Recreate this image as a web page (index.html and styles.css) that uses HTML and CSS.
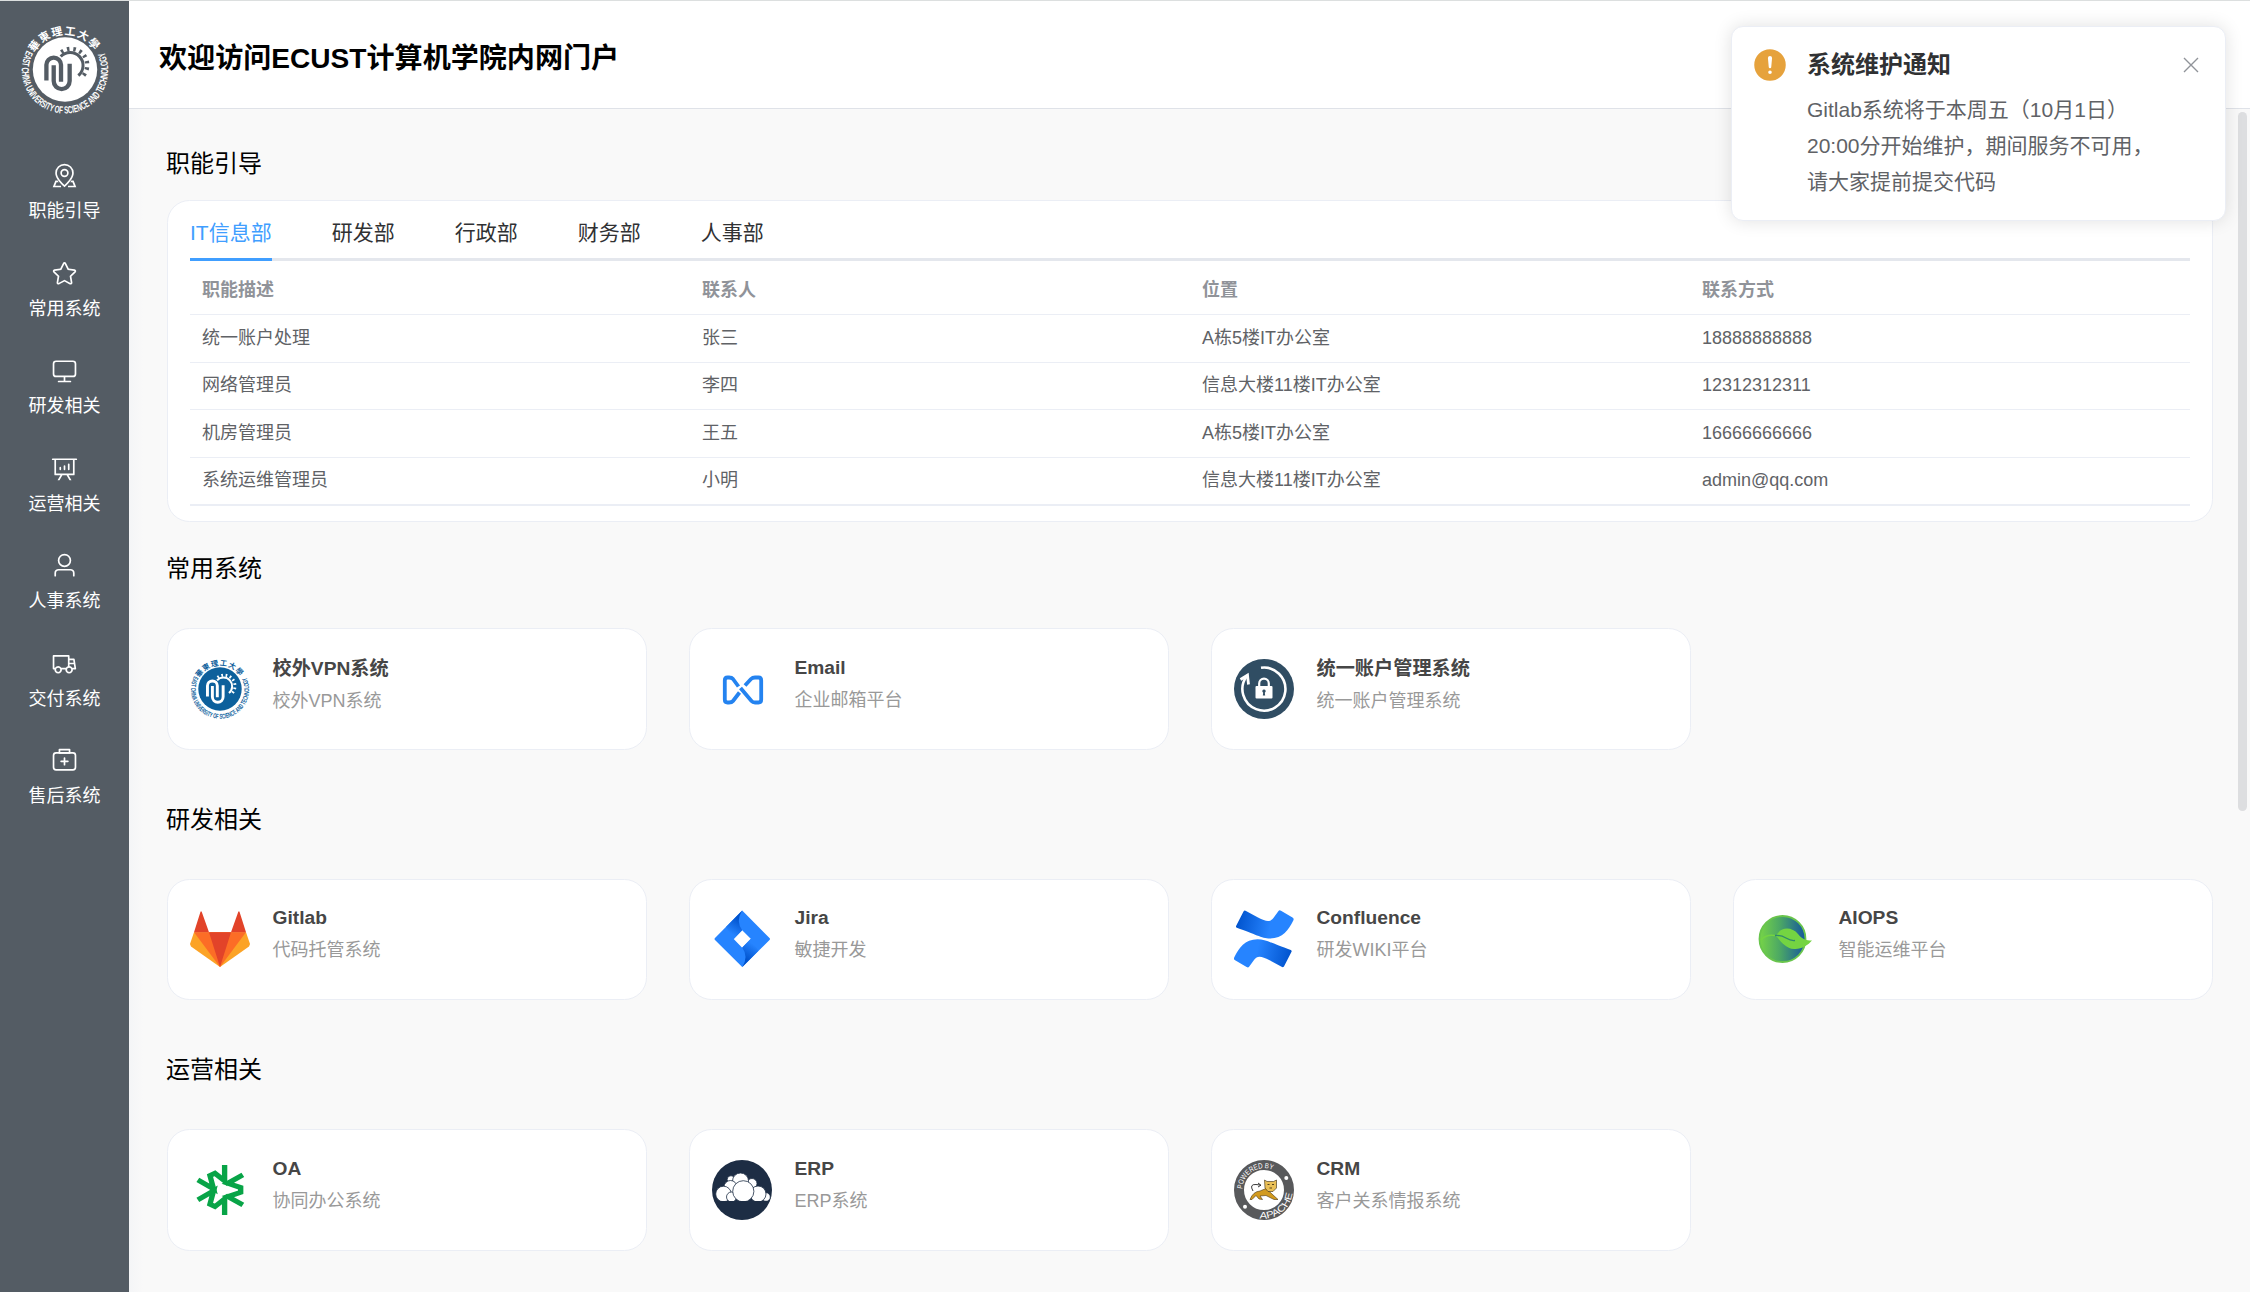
FILE: index.html
```html
<!DOCTYPE html>
<html lang="zh-CN">
<head>
<meta charset="utf-8">
<title>ECUST计算机学院内网门户</title>
<link rel="stylesheet" href="styles.css">
</head>
<body>
<svg class="defs" aria-hidden="true">
  <defs>
    <path id="ring-top" d="M60 105A105 105 0 0 1 244 105"/>
    <path id="ring-bottom" d="M37 97A130 130 0 1 0 267 97"/>
    <symbol id="emblem" viewBox="20 21 264 268">
      <circle cx="152" cy="155" r="97" fill="currentColor"/>
      <g fill="none" stroke="var(--cut)">
        <path d="M139 116A39 39 0 1 1 192 173" stroke-width="9"/>
        <path d="M141 103A48 48 0 1 1 200 180" stroke-width="13" stroke-dasharray="7.500 11.500"/>
        <path d="M96 188V141A22 22 0 0 1 140 141V192" stroke-width="13"/>
        <path d="M118 142V190A24 24 0 0 0 166 190V138" stroke-width="13"/>
      </g>
      <text class="ring-cn" fill="currentColor"><textPath href="#ring-top" textLength="216">華東理工大學</textPath></text>
      <text class="ring-en" fill="currentColor"><textPath href="#ring-bottom" textLength="528" lengthAdjust="spacingAndGlyphs">EAST CHINA UNIVERSITY OF SCIENCE AND TECHNOLOGY</textPath></text>
    </symbol>
    <linearGradient id="jira-shade" x1="28" y1="8" x2="18" y2="24" gradientUnits="userSpaceOnUse"><stop offset=".1" stop-color="#0052cc"/><stop offset="1" stop-color="#2684ff"/></linearGradient>
    <linearGradient id="conf-shade" x1="2" y1="12" x2="40" y2="20" gradientUnits="userSpaceOnUse"><stop offset="0" stop-color="#0052cc"/><stop offset=".9" stop-color="#2684ff"/></linearGradient>
    <linearGradient id="leaf-shade"><stop offset="0" stop-color="#76d447"/><stop offset=".45" stop-color="#4ba765"/><stop offset="1" stop-color="#14569f"/></linearGradient>
    <clipPath id="cloud-clip"><path d="M0 0H60V41H0z"/></clipPath>
  </defs>
</svg>

<div class="app">
  <aside class="sidebar">
    <svg class="logo"><use href="#emblem"/></svg>
    <nav class="nav">
      <a class="nav-item"><svg viewBox="0 0 1024 1024"><path d="M800 416a288 288 0 1 0-576 0c0 118.144 94.528 272.128 288 456.576C705.472 688.128 800 534.144 800 416zM512 960C277.312 746.688 160 565.312 160 416a352 352 0 0 1 704 0c0 149.312-117.312 330.688-352 544z"/><path d="M512 512a96 96 0 1 0 0-192 96 96 0 0 0 0 192zm0 64a160 160 0 1 1 0-320 160 160 0 0 1 0 320z"/><path d="M250 704H166L64 960H380V896H158L212 768H290zM774 704H858L960 960H644V896H866L812 768H734z"/></svg>职能引导</a>
      <a class="nav-item"><svg viewBox="0 0 1024 1024"><path d="m512 747.840 228.160 119.936a6.400 6.400 0 0 0 9.280-6.720l-43.520-254.080 184.512-179.904a6.400 6.400 0 0 0-3.520-10.880l-255.104-37.120L517.760 147.904a6.400 6.400 0 0 0-11.520 0L392.192 379.072l-255.104 37.120a6.400 6.400 0 0 0-3.520 10.880L318.080 606.976l-43.584 254.080a6.400 6.400 0 0 0 9.280 6.720L512 747.840zM313.600 924.480a70.400 70.400 0 0 1-102.144-74.240l37.888-220.928L88.960 472.960A70.400 70.400 0 0 1 128 352.896l221.760-32.256 99.200-200.960a70.400 70.400 0 0 1 126.208 0l99.200 200.960 221.824 32.256a70.400 70.400 0 0 1 39.040 120.064L774.720 629.376l37.888 220.928a70.400 70.400 0 0 1-102.144 74.240L512 820.096l-198.400 104.320z"/></svg>常用系统</a>
      <a class="nav-item"><svg viewBox="0 0 1024 1024"><path d="M544 768v128h192a32 32 0 1 1 0 64H288a32 32 0 1 1 0-64h192V768H192A128 128 0 0 1 64 640V256a128 128 0 0 1 128-128h640a128 128 0 0 1 128 128v384a128 128 0 0 1-128 128H544zM192 192a64 64 0 0 0-64 64v384a64 64 0 0 0 64 64h640a64 64 0 0 0 64-64V256a64 64 0 0 0-64-64H192z"/></svg>研发相关</a>
      <a class="nav-item"><svg viewBox="0 0 1024 1024"><path d="m665.216 768 110.848 192h-73.856L591.360 768H433.024L322.176 960H248.320l110.848-192H160a32 32 0 0 1-32-32V192H64a32 32 0 0 1 0-64h896a32 32 0 1 1 0 64h-64v544a32 32 0 0 1-32 32H665.216zM832 192H192v512h640V192zM352 448a32 32 0 0 1 32 32v64a32 32 0 0 1-64 0v-64a32 32 0 0 1 32-32zm160-64a32 32 0 0 1 32 32v128a32 32 0 0 1-64 0V416a32 32 0 0 1 32-32zm160-64a32 32 0 0 1 32 32v192a32 32 0 1 1-64 0V352a32 32 0 0 1 32-32z"/></svg>运营相关</a>
      <a class="nav-item"><svg viewBox="0 0 1024 1024"><path d="M512 512a192 192 0 1 0 0-384 192 192 0 0 0 0 384zm0 64a256 256 0 1 1 0-512 256 256 0 0 1 0 512zm320 320v-96a96 96 0 0 0-96-96H288a96 96 0 0 0-96 96v96a32 32 0 1 1-64 0v-96a160 160 0 0 1 160-160h448a160 160 0 0 1 160 160v96a32 32 0 1 1-64 0z"/></svg>人事系统</a>
      <a class="nav-item"><svg viewBox="0 0 1024 1024"><path d="M128.896 736H96a32 32 0 0 1-32-32V224a32 32 0 0 1 32-32h576a32 32 0 0 1 32 32v96h164.544a32 32 0 0 1 31.616 27.136l54.144 352A32 32 0 0 1 922.688 736h-91.520a144 144 0 1 1-286.272 0H415.104a144 144 0 1 1-286.272 0zm23.360-64a143.872 143.872 0 0 1 239.488 0H568.320c17.088-25.600 42.240-45.376 71.744-55.808V256H128v416h24.256zm655.488 0h77.632l-19.648-128H704v64.896A144 144 0 0 1 807.744 672zm48.128-192-14.720-96H704v96h151.872zM688 832a80 80 0 1 0 0-160 80 80 0 0 0 0 160zm-416 0a80 80 0 1 0 0-160 80 80 0 0 0 0 160z"/></svg>交付系统</a>
      <a class="nav-item"><svg viewBox="0 0 1024 1024"><path d="M192 256a64 64 0 0 0-64 64v448a64 64 0 0 0 64 64h640a64 64 0 0 0 64-64V320a64 64 0 0 0-64-64H192zm0-64h640a128 128 0 0 1 128 128v448a128 128 0 0 1-128 128H192A128 128 0 0 1 64 768V320a128 128 0 0 1 128-128z"/><path d="M544 512h96a32 32 0 0 1 0 64h-96v96a32 32 0 0 1-64 0v-96h-96a32 32 0 0 1 0-64h96v-96a32 32 0 0 1 64 0v96zM352 128v64h320v-64H352zm-32-64h384a32 32 0 0 1 32 32v128a32 32 0 0 1-32 32H320a32 32 0 0 1-32-32V96a32 32 0 0 1 32-32z"/></svg>售后系统</a>
    </nav>
  </aside>

  <div class="page">
    <header class="header"><h3>欢迎访问ECUST计算机学院内网门户</h3></header>

    <main class="main">
      <h4 class="section-title">职能引导</h4>
      <section class="panel">
        <div class="tabs">
          <span class="tab active">IT信息部</span><span class="tab">研发部</span><span class="tab">行政部</span><span class="tab">财务部</span><span class="tab">人事部</span>
        </div>
        <table class="table">
          <thead><tr><th>职能描述</th><th>联系人</th><th>位置</th><th>联系方式</th></tr></thead>
          <tbody>
            <tr><td>统一账户处理</td><td>张三</td><td>A栋5楼IT办公室</td><td>18888888888</td></tr>
            <tr><td>网络管理员</td><td>李四</td><td>信息大楼11楼IT办公室</td><td>12312312311</td></tr>
            <tr><td>机房管理员</td><td>王五</td><td>A栋5楼IT办公室</td><td>16666666666</td></tr>
            <tr><td>系统运维管理员</td><td>小明</td><td>信息大楼11楼IT办公室</td><td>admin@qq.com</td></tr>
          </tbody>
        </table>
      </section>

      <h4 class="section-title first">常用系统</h4>
      <div class="cards">
        <a class="card"><svg class="card-icon emblem-blue"><use href="#emblem"/></svg><div><b>校外VPN系统</b><p>校外VPN系统</p></div></a>
        <a class="card">
          <svg class="card-icon" viewBox="0 0 60 60"><g fill="none" stroke="#2483f0" stroke-width="3.800" stroke-linejoin="round"><path d="M26.500 27.500 21 20Q19.800 18.500 17 18.500H15.500Q12.800 18.500 12.800 21.500V40.500Q12.800 43.500 15.500 43.500H17Q19.800 43.500 21 42L27.500 33.500"/><path d="M33 26.500 39 20Q40.500 18.500 43 18.500H46.500Q49.200 18.500 49.200 21.500V40.500Q49.200 43.500 46.500 43.500H43Q40.800 43.500 39.500 42L28.500 29"/></g></svg>
          <div class="latin"><b>Email</b><p>企业邮箱平台</p></div></a>
        <a class="card">
          <svg class="card-icon" viewBox="0 0 60 60"><circle cx="30" cy="30" r="30" fill="#304d63"/><g fill="none" stroke="#fff"><path d="M27 8.800A21.500 21.500 0 1 1 12.500 17.500" stroke-width="2.600"/><path d="M6.500 20.500 13.500 16.200 14.500 25.500" stroke-width="2.800"/><path d="M25.200 28V24.500A4.800 4.800 0 0 1 34.800 24.500V28" stroke-width="2.200"/></g><rect x="21.500" y="27" width="17" height="12.500" rx="1" fill="#fff"/><path d="M30 30.500a1.700 1.700 0 0 1 .8 3.200L31.200 36.500H28.800L29.200 33.700A1.700 1.700 0 0 1 30 30.500z" fill="#304d63"/></svg>
          <div><b>统一账户管理系统</b><p>统一账户管理系统</p></div></a>
      </div>

      <h4 class="section-title next">研发相关</h4>
      <div class="cards">
        <a class="card">
          <svg class="card-icon" viewBox="0 0 60 60"><path d="M4 23.300 0 35 1 37.500 30 58 59 37.500 60 35 56 23.300z" fill="#fca326"/><path d="M4 23.300H56L30 58z" fill="#fc6d26"/><path d="M19 23.300H41L30 58zM4 23.300 10.500 2.800Q11 1.500 11.700 2.800L19 23.300zM56 23.300 49.500 2.800Q49 1.500 48.300 2.800L41 23.300z" fill="#e24329"/></svg>
          <div class="latin"><b>Gitlab</b><p>代码托管系统</p></div></a>
        <a class="card">
          <svg class="card-icon" viewBox="0 0 60 60"><path d="M30.200 1.500 57.500 29Q58.500 30 57.500 31L30.200 58 3 31Q2 30 3 29zM30.200 21.200 21.700 30 30.200 38.800 39 30z" fill="#2684ff" fill-rule="evenodd"/><g id="jira-fold"><path d="M30.200 1.500Q23.500 12 30.200 21.200L21.700 30 14 18z" fill="url(#jira-shade)"/></g><use href="#jira-fold" transform="rotate(180 30.200 29.900)"/></svg>
          <div class="latin"><b>Jira</b><p>敏捷开发</p></div></a>
        <a class="card">
          <svg class="card-icon" viewBox="0 0 60 60"><g id="conf-wave"><path d="M9.500 2.500Q10.500 1 12 2L24 8.500C33 13 36.500 13.500 40.500 7.500L44.500 2Q45.500.800 47 1.800L58.500 8.500Q60.300 9.700 59.300 11.500C54.500 21 49 29.500 36 29.500C27.500 29.500 21 25 2.800 18.800Q1.500 18 2.200 16.800z" fill="url(#conf-shade)"/></g><use href="#conf-wave" transform="rotate(180 29.800 29.900)"/></svg>
          <div class="latin"><b>Confluence</b><p>研发WIKI平台</p></div></a>
        <a class="card">
          <svg class="card-icon" viewBox="0 0 60 60"><circle cx="26.500" cy="30" r="23" fill="url(#leaf-shade)" stroke="#69c54c" stroke-width="1.800"/><path d="M20 27C25 17 36 18 42 25C46 30 50 31.500 56 31.500C52 36 46 40.500 38 40C29 39.500 24 31 20 27z" fill="#74d442"/><path d="M5 31Q10 25 19 26.500" fill="none" stroke="#74d442" stroke-width="1.500"/><path d="M19 26.500Q25 26 30 29T39 31.500" fill="none" stroke="#308a6b" stroke-width="1.300"/></svg>
          <div class="latin"><b>AIOPS</b><p>智能运维平台</p></div></a>
      </div>

      <h4 class="section-title next">运营相关</h4>
      <div class="cards">
        <a class="card">
          <svg class="card-icon" viewBox="0 0 60 60"><g transform="translate(-30 -50) scale(.357 .333)" fill="none" stroke="#08a447" stroke-width="15"><path d="M181 165V213L154 190 140 197 150 237 106 210"/><path d="M181 315V267L154 290 140 283 150 243 106 270"/><path d="M232 195 190 220 226 233V247L190 260 232 285"/></g></svg>
          <div class="latin"><b>OA</b><p>协同办公系统</p></div></a>
        <a class="card">
          <svg class="card-icon" viewBox="0 0 60 60"><circle cx="30" cy="30" r="30" fill="#1d2d44"/><g fill="#fff" stroke="#1d2d44" stroke-width=".8" clip-path="url(#cloud-clip)"><circle cx="19" cy="19.500" r="3.800"/><circle cx="40" cy="23.500" r="5"/><circle cx="28.500" cy="21" r="8"/><circle cx="18.500" cy="27" r="6.500"/><circle cx="54" cy="37" r="4.300"/><circle cx="11.500" cy="34" r="7.800"/><circle cx="46" cy="34" r="8"/><circle cx="19.500" cy="37" r="5"/><circle cx="31.300" cy="31.300" r="10.600"/></g></svg>
          <div class="latin"><b>ERP</b><p>ERP系统</p></div></a>
        <a class="card">
          <svg class="card-icon" viewBox="0 0 60 60"><defs><path id="seal-top" d="M8.300 29A21.700 21.700 0 0 1 42 11.800"/><path id="seal-bottom" d="M25.500 58.200A28.500 28.500 0 0 0 58.500 31"/></defs><circle cx="30" cy="30" r="25" fill="#fff" stroke="#58595b" stroke-width="10"/><circle cx="52.300" cy="18" r="2" fill="#fff"/><circle cx="11" cy="46.700" r="2" fill="#fff"/>
          <text class="seal"><textPath href="#seal-top" textLength="42" lengthAdjust="spacingAndGlyphs">POWERED BY</textPath></text><text class="seal large"><textPath href="#seal-bottom" textLength="46" lengthAdjust="spacingAndGlyphs">APACHE</textPath></text>
          <path d="M19 31Q15 24 22 24.500L26 25M24 23 27 25.200 24 27" fill="none" stroke="#222" stroke-width=".9"/><path d="M16 39.500Q19 31.500 26 31L32 28.500 38 34 44 39.500 40 39.500 32 35.500 26 36 28.500 39.500 25 39 22 35.500 18 39.500z" fill="#d29a1e" stroke="#4c3510" stroke-width=".6"/><path d="M30.500 20 33 21.500H39.500L42.500 20V28L39 31.500H34L31 28z" fill="#eac057" stroke="#3b2c12" stroke-width=".6"/><path d="M33.500 24.500H35.500M38 24.500H40M35.500 28H38" stroke="#443313" stroke-width=".9"/></svg>
          <div class="latin"><b>CRM</b><p>客户关系情报系统</p></div></a>
      </div>
    </main>
    <div class="scroll-thumb"></div>
  </div>
</div>

<div class="notice" role="alert">
  <svg class="notice-icon" viewBox="0 0 1024 1024"><path d="M512 64a448 448 0 1 1 0 896 448 448 0 0 1 0-896zm0 192a58.432 58.432 0 0 0-58.240 63.744l23.360 256.384a35.072 35.072 0 0 0 69.760 0l23.296-256.384A58.432 58.432 0 0 0 512 256zm0 512a51.200 51.200 0 1 0 0-102.400 51.200 51.200 0 0 0 0 102.400z" fill="#e6a23c"/></svg>
  <div class="notice-body">
    <h2>系统维护通知</h2>
    <p>Gitlab系统将于本周五（10月1日）<br>20:00分开始维护，期间服务不可用，<br>请大家提前提交代码</p>
  </div>
  <svg class="notice-close" viewBox="0 0 16 16"><path d="M1 1 15 15M15 1 1 15" stroke="#909399" stroke-width="1.400"/></svg>
</div>
</body>
</html>
```
FILE: styles.css
```css
* { box-sizing: border-box; }
html { height: 100%; overflow: hidden; }
body {
  margin: 0;
  height: 100%;
  overflow: hidden;
  font-family: "Liberation Sans", "Noto Sans CJK SC", sans-serif;
  color: #000;
  background: #fff;
}
h2, h3, h4, p { margin: 0; }
.defs { position: absolute; width: 0; height: 0; }

.app {
  display: flex;
  height: 100%;
  border-top: 1px solid #dcdfdf;
  overflow: hidden;
}

.sidebar {
  width: 129px;
  flex: none;
  background: #545c64;
  color: #fff;
  display: flex;
  flex-direction: column;
  align-items: center;
  padding-top: 24px;
}
.logo { --cut: #545c64; width: 88px; height: 89px; display: block; }
.ring-cn { font: bold 33px "Noto Sans CJK TC", sans-serif; }
.ring-en { font: bold 31px "Liberation Sans", sans-serif; }

.nav { margin-top: 48px; }
.nav-item {
  display: flex;
  flex-direction: column;
  align-items: center;
  gap: 9px;
  height: 97.5px;
  font-size: 18px;
  line-height: 27px;
}
.nav-item svg { width: 27px; height: 27px; fill: currentColor; }

.page {
  position: relative;
  flex: 1;
  display: flex;
  flex-direction: column;
  min-width: 0;
}
.header {
  height: 108px;
  flex: none;
  display: flex;
  align-items: center;
  padding: 8px 30px 0;
  border-bottom: 1px solid #dfe2e8;
  background: #fff;
}
.header h3 { font-size: 28.08px; line-height: 42px; }

.main {
  flex: 1;
  min-height: 0;
  overflow: hidden;
  padding: 36.5px 37px 0 38px;
  background: #f9f9f9 linear-gradient(90deg, #f4f5f7, #f9f9f9) no-repeat 0 0 / 14px 100%;
}
.section-title { margin-left: -1px; font-size: 24px; font-weight: 400; line-height: 36px; }
.section-title.first { margin-top: 29px; }
.section-title.next { margin-top: 52px; }

.panel, .card {
  background: #fff;
  border: 1px solid #ebeef5;
  border-radius: 22.5px;
}
.panel { height: 322px; margin-top: 18.5px; padding: 4px 22px 0; }
.tabs {
  display: flex;
  gap: 60px;
  height: 56px;
  box-shadow: inset 0 -3px #e4e7ed;
  font-size: 21px;
  line-height: 56px;
  color: #303133;
}
.tab.active { color: #409eff; box-shadow: inset 0 -3px #409eff; }

.table {
  width: 100%;
  table-layout: fixed;
  border-collapse: separate;
  border-spacing: 0;
  border-bottom: 1px solid #ebeef5;
  font-size: 18px;
  line-height: 27px;
  color: #606266;
}
.table th, .table td {
  height: 47.5px;
  padding: 0 12px;
  text-align: left;
  border-bottom: 1px solid #ebeef5;
}
.table th { height: 54px; padding-top: 6px; color: #909399; }

.cards {
  display: grid;
  grid-template-columns: repeat(4, 1fr);
  gap: 42px;
  margin-top: 41px;
}
.card {
  display: flex;
  align-items: center;
  gap: 22.5px;
  height: 121.5px;
  padding: 0 22px;
}
.card-icon { width: 60px; height: 60px; flex: none; }
.card b { display: block; font-size: 19.2px; line-height: 30px; color: #464646; }
.card p { margin: 2px 0 8px; font-size: 18px; line-height: 30px; color: #999; }
.card .latin { padding-bottom: 2px; }
.emblem-blue { --cut: #fff; color: #0d609c; }
.seal { font: 7.5px "Liberation Sans", sans-serif; fill: #fff; }
.seal.large { font-size: 9.5px; }

.scroll-thumb {
  position: absolute;
  right: 3px;
  top: 111px;
  width: 9px;
  height: 699px;
  border-radius: 5px;
  background: #dddee0;
}

.notice {
  position: absolute;
  top: 26px;
  left: 1731px;
  width: 495px;
  height: 195px;
  display: flex;
  padding: 20px 26px 0 20px;
  background: #fff;
  border: 1px solid #ebeef5;
  border-radius: 12px;
  box-shadow: 0 0 18px rgba(0, 0, 0, .12);
}
.notice-icon { width: 36px; height: 36px; flex: none; }
.notice-body { flex: 1; margin-left: 19px; }
.notice h2 { font-size: 24px; line-height: 36px; color: #303133; }
.notice p { margin-top: 9px; font-size: 21px; line-height: 36px; color: #606266; white-space: nowrap; }
.notice-close { width: 16px; height: 16px; margin-top: 10px; }
```
